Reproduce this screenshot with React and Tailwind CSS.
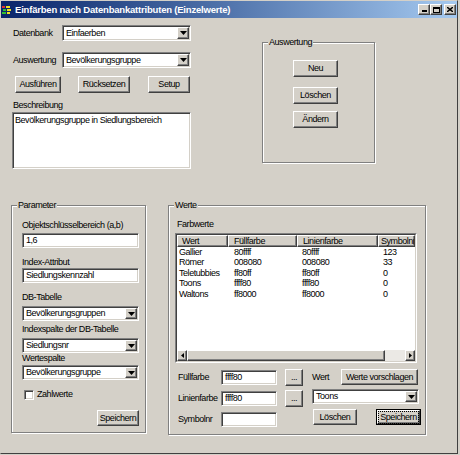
import React from "react";

// classic win2k bevels
const raised =
  "bg-[#d4d0c8] border border-t-white border-l-white border-r-[#404040] border-b-[#404040] shadow-[inset_-1px_-1px_0_#808080]";
const sunken =
  "bg-white border border-t-[#808080] border-l-[#808080] border-r-white border-b-white shadow-[inset_1px_1px_0_#404040,inset_-1px_-1px_0_#d4d0c8]";

function Btn({ className = "", children }) {
  return (
    <div className={`${raised} flex items-center justify-center shrink-0 ${className}`}>
      {children}
    </div>
  );
}

function DefaultBtn({ className = "", children }) {
  return (
    <div className={`border border-black shrink-0 flex ${className}`}>
      <div className={`${raised} flex-1 flex items-center justify-center`}>
        <span className="border border-dotted border-black px-[1px] py-[1px]">{children}</span>
      </div>
    </div>
  );
}

function Field({ value = "", className = "" }) {
  return (
    <div className={`${sunken} flex items-center pl-[3px] shrink-0 ${className}`}>
      {value}
    </div>
  );
}

function DownArrow() {
  return (
    <svg width="7" height="4" viewBox="0 0 7 4">
      <path d="M0 0h7L3.5 4z" fill="#000" />
    </svg>
  );
}

function Combo({ value, className = "" }) {
  return (
    <div className={`${sunken} flex p-[1px] shrink-0 ${className}`}>
      <span className="flex-1 flex items-center pl-[2px]">{value}</span>
      <div className={`${raised} w-[12px] flex items-center justify-center`}>
        <DownArrow />
      </div>
    </div>
  );
}

function Group({ label, className = "", children }) {
  return (
    <div
      className={`relative shrink-0 border border-[#808080] shadow-[1px_1px_0_#fff,inset_1px_1px_0_#fff] ${className}`}
    >
      <span className="absolute -top-[6px] left-[5px] bg-[#d4d0c8] px-[1px] leading-[11px]">
        {label}
      </span>
      {children}
    </div>
  );
}

const rows = [
  ["Gallier", "80ffff", "80ffff", "123"],
  ["Römer", "008080", "008080", "33"],
  ["Teletubbies", "ff80ff", "ff80ff", "0"],
  ["Toons", "ffff80", "ffff80", "0"],
  ["Waltons", "ff8000", "ff8000", "0"],
];

function ListView() {
  return (
    <div className="w-[242px] h-[130px] flex border border-t-[#808080] border-l-[#808080] border-r-white border-b-white">
      <div className="flex-1 flex flex-col overflow-hidden bg-white border border-t-[#404040] border-l-[#404040] border-r-[#d4d0c8] border-b-[#d4d0c8]">
        <div className="h-[12px] flex shrink-0">
          <div className={`${raised} w-[51px] flex items-center pl-[4px]`}>Wert</div>
          <div className={`${raised} w-[69px] flex items-center pl-[5px]`}>Füllfarbe</div>
          <div className={`${raised} w-[81px] flex items-center pl-[5px]`}>Linienfarbe</div>
          <div className={`${raised} flex-1 flex items-center pl-[2px] overflow-hidden`}>
            Symbolnr
          </div>
        </div>
        <div className="flex-1">
          {rows.map((r) => (
            <div key={r[0]} className="h-[10.5px] flex items-center">
              <span className="w-[51px] pl-[2px]">{r[0]}</span>
              <span className="w-[69px] pl-[6px]">{r[1]}</span>
              <span className="w-[81px] pl-[5px]">{r[2]}</span>
              <span className="flex-1 pl-[5px]">{r[3]}</span>
            </div>
          ))}
        </div>
        <div className="h-[11px] flex shrink-0">
          <div className={`${raised} w-[10px] flex items-center justify-center`}>
            <svg width="3" height="5" viewBox="0 0 3 5">
              <path d="M3 0v5L0 2.5z" fill="#000" />
            </svg>
          </div>
          <div className={`${raised} w-[198px]`} />
          <div className="flex-1 bg-[#ebe9e5]" />
          <div className={`${raised} w-[10px] flex items-center justify-center`}>
            <svg width="3" height="5" viewBox="0 0 3 5">
              <path d="M0 0v5L3 2.5z" fill="#000" />
            </svg>
          </div>
        </div>
      </div>
    </div>
  );
}

function TitleBar() {
  return (
    <div className="h-[17px] shrink-0 flex items-center bg-linear-to-r from-[#0a246a] to-[#a6caf0]">
      <svg width="10" height="10" viewBox="0 0 10 10" className="ml-[1px]">
        <rect x="0" y="1" width="3" height="2" fill="#e03030" />
        <rect x="4" y="1" width="4" height="2" fill="#f0e020" />
        <rect x="1" y="4" width="3" height="2" fill="#30c030" />
        <rect x="5" y="4" width="4" height="2" fill="#f0e020" />
        <rect x="0" y="7" width="4" height="2" fill="#30c030" />
        <rect x="5" y="7" width="3" height="2" fill="#f0e020" />
      </svg>
      <span className="ml-[3px] text-white font-bold text-[9.5px] tracking-[-0.2px]">
        Einfärben nach Datenbankattributen (Einzelwerte)
      </span>
      <div className="ml-auto mr-[1px] flex">
        <Btn className="w-[12px] h-[11px] items-end pb-[2px]">
          <div className="w-[5px] h-[2px] bg-black" />
        </Btn>
        <Btn className="w-[12px] h-[11px]">
          <div className="w-[7px] h-[6px] border border-black border-t-2" />
        </Btn>
        <Btn className="w-[12px] h-[11px] ml-[2px]">
          <svg width="6" height="5" viewBox="0 0 6 5">
            <path d="M0 0L6 5M6 0L0 5" stroke="#000" strokeWidth="1.4" />
          </svg>
        </Btn>
      </div>
    </div>
  );
}

export default function App() {
  return (
    <div className="w-[460px] h-[455px] bg-[#d4d0c8] font-['Liberation_Sans',Arial,sans-serif] text-[9px] tracking-[-0.45px] leading-none whitespace-nowrap text-black">
      <div className="w-[458px] h-[454px] flex flex-col border border-t-[#d4d0c8] border-l-[#d4d0c8] border-r-[#404040] border-b-[#404040]">
        <TitleBar />

        {/* top part */}
        <div className="flex">
          <div className="ml-[12px] w-[179px] flex flex-col">
            <div className="mt-[7px] h-[16px] flex items-center">
              <span className="w-[49px]">Datenbank</span>
              <Combo value="Einfaerben" className="w-[129px] h-[16px]" />
            </div>
            <div className="mt-[11px] h-[16px] flex items-center">
              <span className="w-[49px]">Auswertung</span>
              <Combo value="Bevölkerungsgruppe" className="w-[129px] h-[16px]" />
            </div>
            <div className="mt-[8px] h-[17px] flex">
              <Btn className="ml-[2px] w-[46px]">Ausführen</Btn>
              <Btn className="ml-[17px] w-[52px]">Rücksetzen</Btn>
              <Btn className="ml-[18px] w-[42px]">Setup</Btn>
            </div>
            <div className="mt-[6px] h-[12px] flex items-center">Beschreibung</div>
            <div className={`${sunken} mt-[1px] -ml-[1px] w-[179px] h-[57px] pl-[2px] pt-[3px]`}>
              Bevölkerungsgruppe in Siedlungsbereich
            </div>
          </div>

          <Group label="Auswertung" className="ml-[70px] mt-[24px] w-[113px] h-[121px]">
            <div className="flex flex-col pl-[30px]">
              <Btn className="mt-[17px] w-[45px] h-[17px]">Neu</Btn>
              <Btn className="mt-[10px] w-[45px] h-[17px]">Löschen</Btn>
              <Btn className="mt-[7px] w-[45px] h-[17px]">Ändern</Btn>
            </div>
          </Group>
        </div>

        {/* bottom part */}
        <div className="flex mt-[36px]">
          <Group label="Parameter" className="ml-[10px] w-[135px] h-[228px]">
            <div className="flex flex-col pl-[10px] w-[127px]">
              <div className="mt-[13px] h-[12px] flex items-center">Objektschlüsselbereich (a,b)</div>
              <Field value="1,6" className="mt-[2px] w-[117px] h-[15px]" />
              <div className="mt-[9px] h-[11px] flex items-center">Index-Attribut</div>
              <Field value="Siedlungskennzahl" className="w-[117px] h-[15px]" />
              <div className="mt-[9px] h-[11px] flex items-center">DB-Tabelle</div>
              <Combo value="Bevölkerungsgruppen" className="mt-[3px] w-[117px] h-[15px]" />
              <div className="mt-[3px] h-[11px] flex items-center">Indexspalte der DB-Tabelle</div>
              <Combo value="Siedlungsnr" className="mt-[3px] w-[117px] h-[15px]" />
              <div className="h-[11px] flex items-center">Wertespalte</div>
              <Combo value="Bevölkerungsgruppe" className="mt-[1px] w-[117px] h-[15px]" />
              <div className="mt-[9px] h-[11px] flex items-center">
                <div className={`${sunken} ml-[2px] w-[10px] h-[10px]`} />
                <span className="ml-[3px]">Zahlwerte</span>
              </div>
              <Btn className="mt-[10px] self-end w-[42px] h-[16px]">Speichern</Btn>
            </div>
          </Group>

          <Group label="Werte" className="ml-[22px] w-[258px] h-[230px]">
            <div className="flex flex-col pl-[6px]">
              <div className="mt-[12px] ml-[2px] h-[12px] flex items-center">Farbwerte</div>
              <div className="mt-[3px]">
                <ListView />
              </div>
              <div className="mt-[6px] ml-[3px] flex">
                <div className="w-[125px] flex flex-col">
                  <div className="h-[17px] flex items-center">
                    <span className="w-[43px]">Füllfarbe</span>
                    <Field value="ffff80" className="w-[56px] h-[15px]" />
                    <Btn className="ml-[8px] w-[18px] h-[17px]">...</Btn>
                  </div>
                  <div className="mt-[4px] h-[17px] flex items-center">
                    <span className="w-[43px]">Linienfarbe</span>
                    <Field value="ffff80" className="w-[56px] h-[15px]" />
                    <Btn className="ml-[8px] w-[18px] h-[17px]">...</Btn>
                  </div>
                  <div className="mt-[5px] h-[15px] flex items-center">
                    <span className="w-[43px]">Symbolnr</span>
                    <Field className="w-[56px] h-[15px]" />
                  </div>
                </div>
                <div className="ml-[9px] flex flex-col">
                  <div className="h-[16px] flex items-center">
                    <span className="w-[29px]">Wert</span>
                    <Btn className="w-[77px] h-[16px]">Werte vorschlagen</Btn>
                  </div>
                  <Combo value="Toons" className="mt-[4px] w-[107px] h-[15px]" />
                  <div className="mt-[5px] h-[16px] flex">
                    <Btn className="ml-[1px] w-[44px]">Löschen</Btn>
                    <DefaultBtn className="ml-[19px] w-[45px]">Speichern</DefaultBtn>
                  </div>
                </div>
              </div>
            </div>
          </Group>
        </div>
      </div>
    </div>
  );
}
